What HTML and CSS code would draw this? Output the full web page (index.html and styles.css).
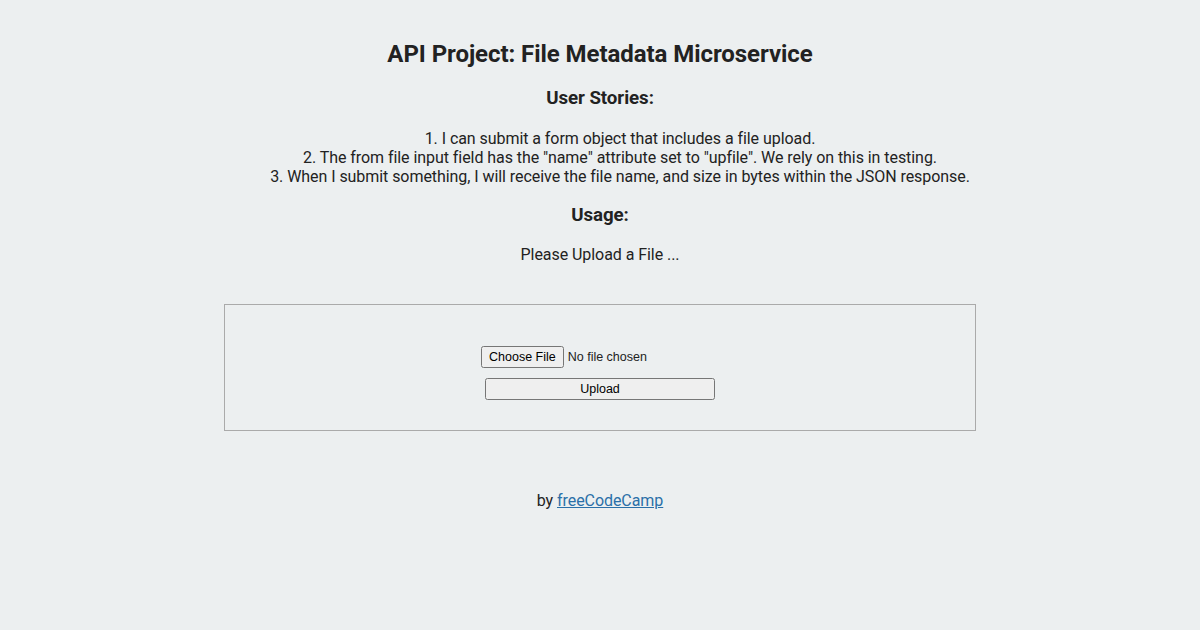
FILE: index.html
```html
<!DOCTYPE html>
<html lang="en">
<head>
<meta charset="utf-8">
<title>File Metadata Microservice</title>
<link rel="stylesheet" href="styles.css">
</head>
<body>
<div class="container">
  <h1 class="title">API Project: File Metadata Microservice</h1>
  <h3 class="subtitle">User Stories:</h3>
  <ul class="stories">
    <li>1. I can submit a form object that includes a file upload.</li>
    <li>2. The from file input field has the "name" attribute set to "upfile". We rely on this in testing.</li>
    <li>3. When I submit something, I will receive the file name, and size in bytes within the JSON response.</li>
  </ul>
  <h3 class="subtitle usage-title">Usage:</h3>
  <p class="usage">Please Upload a File ...</p>
  <form class="upload-form" enctype="multipart/form-data" method="POST" action="/api/fileanalyse">
    <input class="file-input" id="inputfield" type="file" name="upfile">
    <input class="submit-btn" id="button" type="submit" value="Upload">
  </form>
</div>
<div class="footer">
  <p class="credit">by <a class="credit-link" href="#">freeCodeCamp</a></p>
</div>
</body>
</html>
```
FILE: styles.css
```css
html, body {
  margin: 0;
  padding: 0;
}
body {
  font-family: Roboto, "Liberation Sans", sans-serif;
  font-size: 16px;
  letter-spacing: -0.06px;
  color: #222;
  background-color: #eceff0;
  text-align: center;
}
.container {
  padding-top: 24px;
}
.title {
  font-size: 24px;
  font-weight: 700;
  margin: 16px 0;
}
.subtitle {
  font-size: 18.72px;
  font-weight: 700;
  margin: 18.72px 0;
}
.stories {
  list-style: none;
  margin: 20px 0 0;
  padding-left: 40px;
  line-height: 19px;
}
.usage-title {
  margin-top: 18.5px;
}
.usage {
  margin: 16px 0;
}
.upload-form {
  box-sizing: border-box;
  width: 752px;
  height: 127px;
  margin: 40px auto 0;
  padding: 41px 0 0;
  border: 1px solid #aaa;
}
.file-input {
  display: block;
  width: 238px;
  height: 22px;
  margin: 0 auto;
  font-family: "Liberation Sans", Arial, sans-serif;
  font-size: 12.5px;
  letter-spacing: 0;
  color: #222;
}
.file-input::file-selector-button {
  height: 22px;
}
.submit-btn {
  display: block;
  box-sizing: border-box;
  width: 230px;
  height: 22px;
  margin: 10px auto 0;
  font-family: "Liberation Sans", Arial, sans-serif;
  font-size: 12.5px;
  letter-spacing: 0;
}
.footer {
  margin-top: 60px;
}
.credit {
  margin: 0;
}
.credit-link {
  color: #2a6fa8;
}
```
